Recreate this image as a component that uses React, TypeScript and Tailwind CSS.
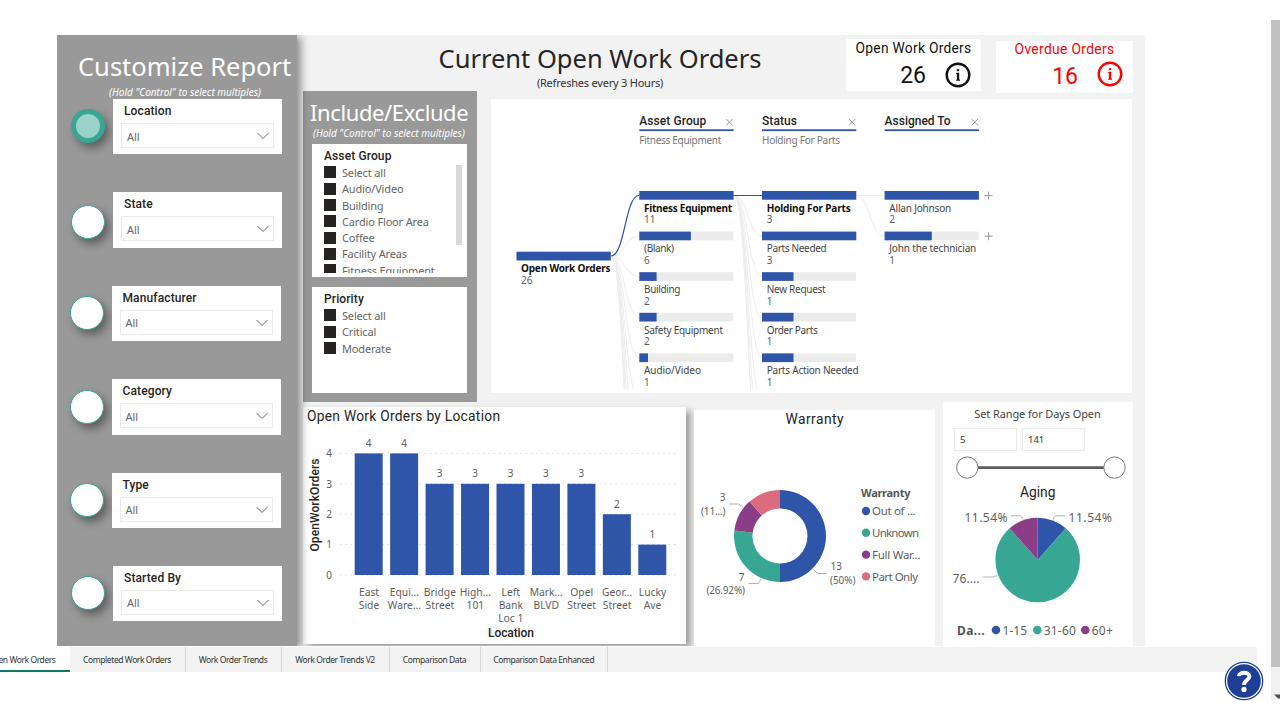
import { ReactNode } from "react";
import clsx from "clsx";

const BLUE = "#2f55a8";
const TEAL = "#37a794";
const PURPLE = "#8b3d88";
const PINK = "#dd6b7f";

const SEGOE = "'Noto Sans', 'Open Sans', sans-serif";
const DIN = "Roboto, 'Liberation Sans', sans-serif";

type LabelProps = {
  x: number;
  y: number;
  size?: number;
  width?: number;
  fill?: string;
  weight?: number;
  anchor?: "start" | "middle" | "end";
  din?: boolean;
  transform?: string;
  children: ReactNode;
};

function Label({ x, y, size = 10, width, fill = "#605e5c", weight = 400, anchor = "start", din, transform, children }: LabelProps) {
  return (
    <text
      x={x}
      y={y}
      fontSize={size}
      fill={fill}
      fontWeight={weight}
      textAnchor={anchor}
      fontFamily={din ? DIN : SEGOE}
      textLength={width}
      transform={transform}
    >
      {children}
    </text>
  );
}

function slicePath(cx: number, cy: number, r: number, inner: number, from: number, to: number) {
  const point = (radius: number, t: number) => {
    const a = t * Math.PI * 2 - Math.PI / 2;
    return `${(cx + radius * Math.cos(a)).toFixed(2)} ${(cy + radius * Math.sin(a)).toFixed(2)}`;
  };
  const large = to - from > 0.5 ? 1 : 0;
  return `M${point(r, from)}A${r} ${r} 0 ${large} 1 ${point(r, to)}L${point(inner, to)}A${inner} ${inner} 0 ${large} 0 ${point(inner, from)}Z`;
}

const slicers = [
  { name: "Location", row: "mt-0 ml-[14px]", dot: "mt-[10px]", active: true },
  { name: "State", row: "mt-[38px] ml-[14px]", dot: "mt-[13px]" },
  { name: "Manufacturer", row: "mt-[38px] ml-[12.5px]", dot: "mt-[10px]" },
  { name: "Category", row: "mt-[38px] ml-[12.5px]", dot: "mt-[11px]" },
  { name: "Type", row: "mt-[38px] ml-[12.5px]", dot: "mt-[10px]" },
  { name: "Started By", row: "mt-[38px] ml-[14px]", dot: "mt-[10px]" },
];

function FilterPanel() {
  return (
    <aside className="relative z-10 w-60 shrink-0 bg-[#999999] shadow-[4px_2px_8px_rgba(0,0,0,0.42)]">
      <h1 className="ml-[21px] h-[50px] pt-[14px] text-[25.5px] leading-[34px] whitespace-nowrap text-white">Customize Report</h1>
      <p className="h-[14px] pl-[16px] text-center text-[10px] leading-[15px] text-white italic">
        (Hold "Control" to select multiples)
      </p>
      {slicers.map((slicer) => (
        <div key={slicer.name} className={clsx("flex h-[55.4px] gap-2", slicer.row)}>
          <div
            className={clsx(
              "h-[34px] w-[34px] shrink-0 rounded-full shadow-[4px_5px_8px_rgba(0,0,0,0.38)]",
              slicer.dot,
              slicer.active ? "border-[5px] border-[#37a794] bg-[#9bd3ca]" : "border border-[#37a794] bg-white"
            )}
          />
          <div className="w-[169px] bg-white pr-2 pl-[8px]">
            <p className="h-[24px] pl-[3px] font-[Roboto] text-[12px] leading-[25px] font-medium tracking-[0.01em] text-[#252423]">
              {slicer.name}
            </p>
            <div className="flex h-[25px] items-center justify-between border border-[#eaeaea] pt-px pr-[3px] pl-[5px]">
              <span className="text-[11px] leading-none text-[#666666]">All</span>
              <svg width="14" height="8" viewBox="0 0 14 8" fill="none" stroke="#666" strokeWidth="1">
                <path d="M1.5 1L7 6.5L12.5 1" />
              </svg>
            </div>
          </div>
        </div>
      ))}
    </aside>
  );
}

function CheckRow({ label }: { label: string }) {
  return (
    <div className="flex h-[16.3px] shrink-0 items-center gap-[6px]">
      <span className="h-3 w-3 bg-[#252423]" />
      <span className="text-[11px] leading-none tracking-[-0.015em] whitespace-nowrap text-[#666666]">{label}</span>
    </div>
  );
}

function IncludePanel() {
  const groups = ["Select all", "Audio/Video", "Building", "Cardio Floor Area", "Coffee", "Facility Areas", "Fitness Equipment"];
  return (
    <section className="h-[310.5px] w-[174px] shrink-0 bg-[#999999] px-[9px]">
      <h2 className="-ml-[2px] h-[36px] pt-[7px] text-[22px] leading-[28px] tracking-[-0.018em] whitespace-nowrap text-white">Include/Exclude</h2>
      <p className="h-[17px] pl-px text-[10px] leading-[13px] whitespace-nowrap text-white italic">
        (Hold "Control" to select multiples)
      </p>
      <div className="flex h-[133px] w-[155px] bg-white pr-[5px] pl-[12px]">
        <div className="flex-1">
          <p className="h-[20.3px] font-[Roboto] text-[12px] leading-[25px] font-medium tracking-[0.01em] text-[#252423]">Asset Group</p>
          <div className="flex h-[108.7px] flex-col overflow-hidden">
            {groups.map((g) => (
              <CheckRow key={g} label={g} />
            ))}
          </div>
        </div>
        <div className="mt-[21px] h-[80px] w-[6px] bg-[#d9d9d9]" />
      </div>
      <div className="mt-[10px] h-[106px] w-[155px] bg-white pl-[12px]">
        <p className="h-[20.3px] font-[Roboto] text-[12px] leading-[25px] font-medium tracking-[0.01em] text-[#252423]">Priority</p>
        {["Select all", "Critical", "Moderate"].map((p) => (
          <CheckRow key={p} label={p} />
        ))}
      </div>
    </section>
  );
}

function InfoIcon({ className }: { className?: string }) {
  return (
    <svg width="26" height="26" viewBox="0 0 26 26" className={className} fill="none" stroke="currentColor">
      <circle cx="13" cy="13" r="11.3" strokeWidth="2.4" />
      <path d="M11.8 7.2H14.2V9.2H11.8Z" fill="currentColor" stroke="none" />
      <path d="M11.2 10.8H14.2V17.4H15V18.8H11.2V17.4H11.9V12.2H11.2Z" fill="currentColor" stroke="none" />
    </svg>
  );
}

type TreeNode = { name: string; value: number; bar: number; nameWidth: number };

const levels: { title: string; titleWidth: number; picked?: string; pickedWidth?: number; x: number; nodes: TreeNode[] }[] = [
  {
    title: "Asset Group",
    titleWidth: 67,
    picked: "Fitness Equipment",
    pickedWidth: 82,
    x: 639.3,
    nodes: [
      { name: "Fitness Equipment", value: 11, bar: 94.3, nameWidth: 88 },
      { name: "(Blank)", value: 6, bar: 51.6, nameWidth: 30 },
      { name: "Building", value: 2, bar: 17.3, nameWidth: 36.5 },
      { name: "Safety Equipment", value: 2, bar: 17.3, nameWidth: 79 },
      { name: "Audio/Video", value: 1, bar: 8.7, nameWidth: 57 },
    ],
  },
  {
    title: "Status",
    titleWidth: 35,
    picked: "Holding For Parts",
    pickedWidth: 78,
    x: 762,
    nodes: [
      { name: "Holding For Parts", value: 3, bar: 94.3, nameWidth: 84 },
      { name: "Parts Needed", value: 3, bar: 94.3, nameWidth: 60 },
      { name: "New Request", value: 1, bar: 31.5, nameWidth: 59 },
      { name: "Order Parts", value: 1, bar: 31.5, nameWidth: 51 },
      { name: "Parts Action Needed", value: 1, bar: 31.5, nameWidth: 92 },
    ],
  },
  {
    title: "Assigned To",
    titleWidth: 66,
    x: 884.6,
    nodes: [
      { name: "Allan Johnson", value: 2, bar: 94.3, nameWidth: 62 },
      { name: "John the technician", value: 1, bar: 47.2, nameWidth: 87 },
    ],
  },
];

function link(x1: number, y1: number, x2: number, y2: number) {
  const mid = (x1 + x2) / 2;
  return `M${x1} ${y1}C${mid} ${y1} ${mid} ${y2} ${x2} ${y2}`;
}

function DecompositionTree() {
  const rows = [1, 2, 3, 4, 5, 6, 7, 8, 9];
  return (
    <svg width="641" height="294" viewBox="491 99 641 294" className="ml-[14px] mt-2 shrink-0 bg-white">
      <clipPath id="tree-clip">
        <rect x="491" y="99" width="641" height="290.5" />
      </clipPath>
      <g clipPath="url(#tree-clip)" fill="none" stroke="#ececec">
        {rows.map((r) => (
          <path key={r} d={link(611, 256, 639, 195.5 + r * 40.6)} />
        ))}
        {rows.slice(0, 7).map((r) => (
          <path key={r} d={link(734, 195.5, 762, 195.5 + r * 40.6)} />
        ))}
        <path d={link(856, 195.5, 884, 195.5)} />
        <path d={link(856, 195.5, 884, 236)} />
        <path d={link(611, 256, 639, 195.5)} stroke={BLUE} strokeWidth="1.2" />
        <path d="M733 195.5H762" stroke={BLUE} strokeWidth="1.2" />
      </g>
      <rect x="516.5" y="251.7" width="94.3" height="8.8" fill={BLUE} />
      <Label x={521} y={272} width={89.5} weight={700} fill="#111">Open Work Orders</Label>
      <Label x={521} y={284}>26</Label>
      {levels.map((level, i) => (
        <g key={level.title}>
          <Label x={level.x} y={125} size={12} width={level.titleWidth} weight={500} fill="#252423" din>{level.title}</Label>
          <path d={`M${level.x + 87} 119l6.4 6.4m0 -6.4l-6.4 6.4`} stroke="#999" />
          <rect x={level.x} y="129.3" width="94.3" height="1.8" fill={BLUE} />
          {level.picked && <Label x={level.x} y={144} width={level.pickedWidth} fill="#777">{level.picked}</Label>}
          {level.nodes.map((node, n) => {
            const y = 191 + n * 40.6;
            const selected = n === 0 && i < 2;
            return (
              <g key={node.name}>
                <rect x={level.x} y={y} width="94" height="8.7" fill="#ebebeb" />
                <rect x={level.x} y={y} width={node.bar} height="8.7" fill={BLUE} />
                <Label x={level.x + 4.7} y={y + 20.8} width={node.nameWidth} weight={selected ? 700 : 400} fill={selected ? "#111" : "#444"}>
                  {node.name}
                </Label>
                <Label x={level.x + 4.7} y={y + 32.3}>{node.value}</Label>
                {i === 2 && <path d={`M${level.x + 100} ${y + 4.6}h8m-4 -4v8`} stroke="#999" />}
              </g>
            );
          })}
        </g>
      ))}
    </svg>
  );
}

const locations = [
  { lines: ["East", "Side"], value: 4 },
  { lines: ["Equi...", "Ware..."], value: 4 },
  { lines: ["Bridge", "Street"], value: 3 },
  { lines: ["High...", "101"], value: 3 },
  { lines: ["Left", "Bank", "Loc 1"], value: 3 },
  { lines: ["Mark...", "BLVD"], value: 3 },
  { lines: ["Opel", "Street"], value: 3 },
  { lines: ["Geor...", "Street"], value: 2 },
  { lines: ["Lucky", "Ave"], value: 1 },
];

function LocationChart() {
  return (
    <svg width="383" height="237" viewBox="303 407 383 237" className="shrink-0 bg-white shadow-[5px_4px_7px_rgba(0,0,0,0.35)]">
      <Label x={307} y={421} size={13.8} width={193} fill="#252423" din>Open Work Orders by Location</Label>
      {[0, 1, 2, 3, 4].map((v) => (
        <g key={v}>
          <path d={`M340 ${575 - v * 30.4}H679`} stroke="#d4d4d4" strokeDasharray="1.3 4" />
          <Label x={329} y={578.8 - v * 30.4} anchor="middle">{v}</Label>
        </g>
      ))}
      {locations.map((loc, i) => {
        const x = 354.7 + i * 35.45;
        const h = loc.value * 30.4;
        return (
          <g key={i}>
            <rect x={x} y={575 - h} width="28" height={h} fill={BLUE} />
            <Label x={x + 14} y={568.5 - h} anchor="middle">{loc.value}</Label>
            {loc.lines.map((line, n) => (
              <Label key={line} x={x + 14.3} y={595.5 + n * 13.4} size={10.3} anchor="middle">{line}</Label>
            ))}
          </g>
        );
      })}
      <Label x={511} y={636.5} size={12} width={46} weight={500} fill="#252423" anchor="middle" din>Location</Label>
      <Label x={0} y={0} size={12} width={93} weight={500} fill="#252423" anchor="middle" din transform="translate(318.5 505) rotate(-90)">
        OpenWorkOrders
      </Label>
    </svg>
  );
}

const warranty = [
  { name: "Out of ...", from: 0, to: 0.5, color: BLUE, width: 43.5 },
  { name: "Unknown", from: 0.5, to: 0.7692, color: TEAL, width: 47 },
  { name: "Full War...", from: 0.7692, to: 0.8846, color: PURPLE, width: 48.5 },
  { name: "Part Only", from: 0.8846, to: 1, color: PINK, width: 46 },
];

function WarrantyChart() {
  return (
    <svg width="241" height="236" viewBox="694 410 241 236" className="mt-[3px] ml-2 shrink-0 bg-white">
      <Label x={814.5} y={423.5} size={13.8} width={58} fill="#252423" anchor="middle" din>Warranty</Label>
      {warranty.map((w) => (
        <path key={w.name} d={slicePath(780, 536, 46, 27.5, w.from, w.to)} fill={w.color} />
      ))}
      <g fill="none" stroke="#b3b3b3">
        <path d="M729 504H738.5L743 507" />
        <path d="M748.5 583.5H758.5L761 579" />
        <path d="M813.5 569.5L817.5 573.5H826.5" />
      </g>
      <Label x={725.5} y={501} anchor="end">3</Label>
      <Label x={725.5} y={515} anchor="end" width={24.5}>(11...)</Label>
      <Label x={744.5} y={580.5} anchor="end">7</Label>
      <Label x={745} y={594} anchor="end" width={38.5}>(26.92%)</Label>
      <Label x={830.5} y={570}>13</Label>
      <Label x={830} y={583.5} width={25.5}>(50%)</Label>
      <Label x={861} y={497} size={11} width={49.5} weight={700} fill="#555">Warranty</Label>
      {warranty.map((w, i) => (
        <g key={w.name}>
          <circle cx="866" cy={511 + i * 21.8} r="4.2" fill={w.color} />
          <Label x={872} y={515.2 + i * 21.8} size={11.5} width={w.width}>{w.name}</Label>
        </g>
      ))}
    </svg>
  );
}

const aging = [
  { name: "1-15", from: 0, to: 0.1154, color: BLUE, x: 996, width: 24.5 },
  { name: "31-60", from: 0.1154, to: 0.8846, color: TEAL, x: 1037.3, width: 32 },
  { name: "60+", from: 0.8846, to: 1, color: PURPLE, x: 1085.3, width: 21 },
];

function AgingPanel() {
  return (
    <section className="-mt-[5px] ml-2 h-[244px] w-[190px] shrink-0 bg-white">
      <p className="h-[26px] pt-[3px] pr-px text-center text-[11px] leading-[18px] tracking-[-0.01em] text-[#444444]">Set Range for Days Open</p>
      <div className="flex gap-[5px] pl-[11px] text-[9.5px] text-[#333333]">
        <div className="h-[23px] w-[63px] border border-[#eaeaea] pl-[5px] leading-[22px]">5</div>
        <div className="h-[23px] w-[63px] border border-[#eaeaea] pl-[5px] leading-[22px]">141</div>
      </div>
      <svg width="190" height="195" viewBox="943 451 190 195">
        <path d="M967 467.6H1114" stroke="#605e5c" strokeWidth="2.6" />
        <circle cx="967.3" cy="467.6" r="10.7" fill="#fff" stroke="#777" />
        <circle cx="1114.5" cy="467.6" r="10.7" fill="#fff" stroke="#777" />
        <Label x={1037.7} y={497} size={13.8} width={35.5} fill="#252423" anchor="middle" din>Aging</Label>
        {aging.map((a) => (
          <path key={a.name} d={slicePath(1037.7, 560, 42.3, 0, a.from, a.to)} fill={a.color} />
        ))}
        <g fill="none" stroke="#b3b3b3">
          <path d="M1011 515.8H1020.5Q1022 516 1022.7 519.5" />
          <path d="M1065 515.8H1055.5Q1054 516 1053.2 519.5" />
          <path d="M983 577H992Q995 577 997 575.5" />
        </g>
        <Label x={964.5} y={521.5} size={12} width={43}>11.54%</Label>
        <Label x={1068.5} y={521.5} size={12} width={43.5}>11.54%</Label>
        <Label x={952.5} y={582.5} size={12} width={27}>76....</Label>
        <Label x={957} y={635} size={12} width={27.5} weight={700} fill="#555">Da...</Label>
        {aging.map((a) => (
          <g key={a.name}>
            <circle cx={a.x} cy="630" r="4.3" fill={a.color} />
            <Label x={a.x + 6.5} y={635} size={12} width={a.width}>{a.name}</Label>
          </g>
        ))}
      </svg>
    </section>
  );
}

const tabs = [
  { name: "Completed Work Orders", width: "w-[116px]" },
  { name: "Work Order Trends", width: "w-[96px]" },
  { name: "Work Order Trends V2", width: "w-[108px]" },
  { name: "Comparison Data", width: "w-[91px]" },
  { name: "Comparison Data Enhanced", width: "w-[127.5px]" },
];

export default function App() {
  return (
    <div className="relative flex h-[720px] w-[1280px] justify-between overflow-hidden bg-white font-['Noto_Sans',sans-serif]">
      <div className="w-[1257px] pt-[35px]">
        <div className="ml-[57px] flex h-[611px] w-[1087.5px] overflow-hidden bg-[#f2f2f2]">
          <FilterPanel />
          <main className="ml-[6px] w-[842px] shrink-0">
            <header className="flex h-[56px] pl-[136px]">
              <div className="w-[322px] text-center">
                <h1 className="-mx-2 mt-[6px] text-[25.5px] leading-[34px] whitespace-nowrap text-[#252423]">Current Open Work Orders</h1>
                <p className="pt-px text-[11px] leading-[14px] tracking-[-0.02em] text-[#333333]">(Refreshes every 3 Hours)</p>
              </div>
              <div className="mt-1 ml-[85px] h-[52px] w-[135px] bg-white text-[#111111]">
                <p className="h-[19px] text-center font-[Roboto] text-[13.8px] leading-[18px] tracking-[0.02em]">Open Work Orders</p>
                <div className="flex items-center justify-end gap-[19px] pr-[10px]">
                  <span className="pt-[2px] font-[Roboto] text-[23px] leading-[32px]">26</span>
                  <InfoIcon />
                </div>
              </div>
              <div className="mt-[6px] ml-[15px] h-[52px] w-[137px] bg-white text-[#ff0000]">
                <p className="h-[17px] text-center font-[Roboto] text-[13.8px] leading-[16px] tracking-[0.025em]">Overdue Orders</p>
                <div className="flex items-start justify-end gap-[19px] pr-[10px]">
                  <span className="font-[Roboto] text-[23px] leading-[38px]">16</span>
                  <InfoIcon className="mt-[3px]" />
                </div>
              </div>
            </header>
            <div className="flex h-[316px]">
              <IncludePanel />
              <DecompositionTree />
            </div>
            <div className="flex">
              <LocationChart />
              <WarrantyChart />
              <AgingPanel />
            </div>
          </main>
        </div>
        <nav className="mt-px flex h-[25px] bg-[#f3f3f3] text-[8.5px] leading-[25px] tracking-[-0.05em] whitespace-nowrap text-[#333333]">
          <div className="flex w-[69.5px] shrink-0 justify-end border-b-2 border-[#0f7a63] bg-white pr-[14px]">Open Work Orders</div>
          {tabs.map((tab) => (
            <div key={tab.name} className={clsx("shrink-0 border-r border-[#d6d6d6] text-center", tab.width)}>
              {tab.name}
            </div>
          ))}
        </nav>
      </div>
      <div className="mt-5 flex h-[680px] w-[9px] flex-col justify-between bg-[#f1f1f1]">
        <div className="h-[647px] bg-[#c1c1c1]" />
        <svg width="9" height="5" viewBox="0 0 9 5" className="mb-px">
          <path d="M3 0.5H9V4.5H7Z" fill="#505050" />
        </svg>
      </div>
      <button type="button" className="absolute top-[661px] left-[1224px] h-[40px] w-[40px] cursor-pointer">
        <svg width="40" height="40" viewBox="0 0 40 40">
          <circle cx="20" cy="20" r="18.7" fill="#fff" stroke="#1f3f97" strokeWidth="1.3" />
          <circle cx="20" cy="20" r="16.8" fill="#1f3f97" />
          <path d="M14.8 15.2C15 10.7 25.4 10.3 25.4 15.6C25.4 19 20 19.2 20 24" fill="none" stroke="#fff" strokeWidth="3.8" />
          <circle cx="20" cy="28.4" r="2.6" fill="#fff" />
        </svg>
      </button>
    </div>
  );
}
